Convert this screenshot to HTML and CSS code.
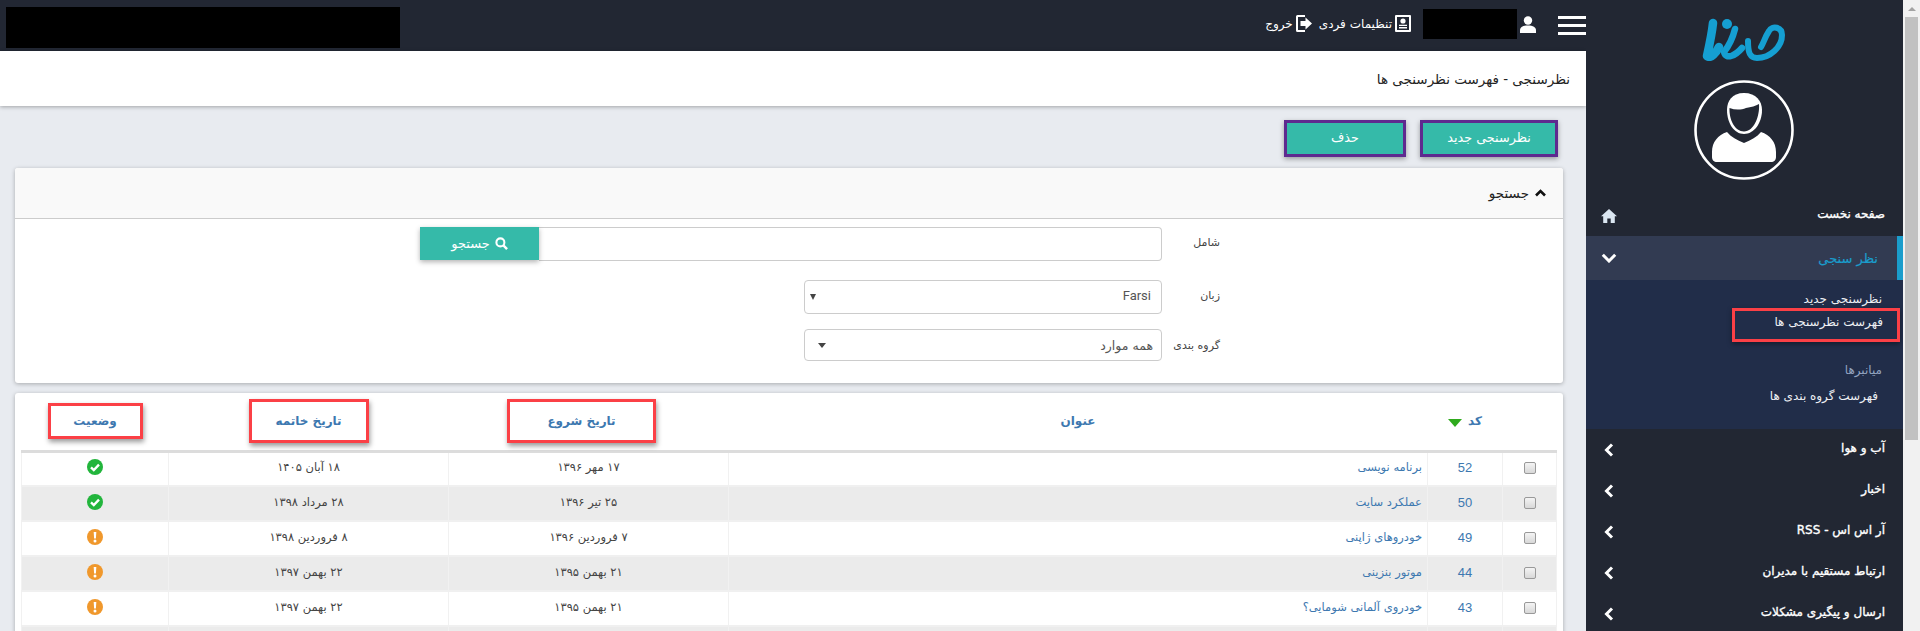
FILE: index.html
```html
<!DOCTYPE html>
<html lang="fa">
<head>
<meta charset="utf-8">
<title>فهرست نظرسنجی ها</title>
<link rel="stylesheet" href="styles.css">
</head>
<body>
<div class="shell">
  <main class="main" dir="rtl">
    <header class="topbar">
      <div class="hamburger"><span></span><span></span><span></span></div>
      <svg class="ic-user" viewBox="0 0 16 17"><circle cx="8" cy="4.5" r="4.2" fill="#fff"/><path d="M0 17v-2.5C0 11 3 9.5 8 9.5s8 1.5 8 5V17z" fill="#fff"/></svg>
      <div class="redact redact-user"></div>
      <a class="top-link link-settings">
        <svg class="ic-top" viewBox="0 0 16 17"><path d="M1 0h14a1 1 0 0 1 1 1v15a1 1 0 0 1-1 1H1a1 1 0 0 1-1-1V1a1 1 0 0 1 1-1zm1 2v13h12V2z" fill="#fff"/><circle cx="8" cy="6" r="2.6" fill="#fff"/><path d="M4 11V9.800h8V11zM4 13.500v-1.500h8v1.500z" fill="#fff"/></svg>
        <span>تنظیمات فردی</span>
      </a>
      <a class="top-link link-exit">
        <svg class="ic-top" viewBox="0 0 16 17"><path d="M0 1.500A1.500 1.500 0 0 1 1.500 0H9v2H2v13h7v2H1.500A1.500 1.500 0 0 1 0 15.500z" fill="#fff"/><path d="M4.500 6h5V2.500L16 8.500l-6.500 6V11h-5z" fill="#fff"/></svg>
        <span>خروج</span>
      </a>
      <div class="redact redact-brand"></div>
    </header>

    <div class="page-title"><h1>نظرسنجی - فهرست نظرسنجی ها</h1></div>

    <div class="actions">
      <button class="btn btn-new">نظرسنجی جدید</button>
      <button class="btn btn-del">حذف</button>
    </div>

    <section class="panel search">
      <div class="panel-head">
        <svg class="ic-up" viewBox="0 0 11 8"><path d="M1 6.500 5.500 2 10 6.500" fill="none" stroke="#111" stroke-width="2.600"/></svg>
        <span>جستجو</span>
      </div>
      <div class="form-row row-a">
        <label>شامل</label>
        <div class="input-group">
          <div class="input"></div>
          <button class="btn-search">
            <svg class="ic-search" viewBox="0 0 14 14"><circle cx="5.800" cy="5.800" r="4.300" fill="none" stroke="#fff" stroke-width="2.200"/><path d="m9 9 4 4" stroke="#fff" stroke-width="2.600"/></svg>
            <span>جستجو</span>
          </button>
        </div>
      </div>
      <div class="form-row row-b">
        <label>زبان</label>
        <div class="select select-b"><span class="val-latin">Farsi</span><i class="caret caret-sm"></i></div>
      </div>
      <div class="form-row row-c">
        <label class="label-low">گروه بندی</label>
        <div class="select select-c"><span>همه موارد</span><i class="caret"></i></div>
      </div>
    </section>

    <section class="panel list">
      <table>
        <colgroup>
          <col class="c-check"><col class="c-code"><col class="c-title"><col class="c-date"><col class="c-date"><col class="c-status">
        </colgroup>
        <thead>
          <tr>
            <th></th>
            <th><span class="sort">کد</span><i class="sort-arrow"></i></th>
            <th>عنوان</th>
            <th><span class="mark mark-start">تاریخ شروع</span></th>
            <th><span class="mark mark-end">تاریخ خاتمه</span></th>
            <th><span class="mark mark-status">وضعیت</span></th>
          </tr>
        </thead>
        <tbody>
          <tr>
            <td><i class="check"></i></td><td class="code">52</td><td class="name">برنامه نویسی</td><td>۱۷ مهر ۱۳۹۶</td><td>۱۸ آبان ۱۴۰۵</td>
            <td><svg class="st" viewBox="0 0 16 16"><circle cx="8" cy="8" r="8" fill="#22b53c"/><path d="m4 8.300 2.800 2.700L12 5.700" fill="none" stroke="#fff" stroke-width="2.400"/></svg></td>
          </tr>
          <tr>
            <td><i class="check"></i></td><td class="code">50</td><td class="name">عملکرد سایت</td><td>۲۵ تیر ۱۳۹۶</td><td>۲۸ مرداد ۱۳۹۸</td>
            <td><svg class="st" viewBox="0 0 16 16"><circle cx="8" cy="8" r="8" fill="#22b53c"/><path d="m4 8.300 2.800 2.700L12 5.700" fill="none" stroke="#fff" stroke-width="2.400"/></svg></td>
          </tr>
          <tr>
            <td><i class="check"></i></td><td class="code">49</td><td class="name">خودروهای ژاپنی</td><td>۷ فروردین ۱۳۹۶</td><td>۸ فروردین ۱۳۹۸</td>
            <td><svg class="st" viewBox="0 0 16 16"><circle cx="8" cy="8" r="8" fill="#f0982c"/><path d="M6.700 3h2.600l-.4 6.500H7.100z" fill="#fff"/><circle cx="8" cy="12" r="1.500" fill="#fff"/></svg></td>
          </tr>
          <tr>
            <td><i class="check"></i></td><td class="code">44</td><td class="name">موتور بنزینی</td><td>۲۱ بهمن ۱۳۹۵</td><td>۲۲ بهمن ۱۳۹۷</td>
            <td><svg class="st" viewBox="0 0 16 16"><circle cx="8" cy="8" r="8" fill="#f0982c"/><path d="M6.700 3h2.600l-.4 6.500H7.100z" fill="#fff"/><circle cx="8" cy="12" r="1.500" fill="#fff"/></svg></td>
          </tr>
          <tr>
            <td><i class="check"></i></td><td class="code">43</td><td class="name">خودروی آلمانی شومایی؟</td><td>۲۱ بهمن ۱۳۹۵</td><td>۲۲ بهمن ۱۳۹۷</td>
            <td><svg class="st" viewBox="0 0 16 16"><circle cx="8" cy="8" r="8" fill="#f0982c"/><path d="M6.700 3h2.600l-.4 6.500H7.100z" fill="#fff"/><circle cx="8" cy="12" r="1.500" fill="#fff"/></svg></td>
          </tr>
          <tr><td></td><td></td><td></td><td></td><td></td><td></td></tr>
        </tbody>
      </table>
    </section>
  </main>

  <aside class="sidebar" dir="rtl">
    <div class="brand">
      <svg class="logo" viewBox="0 0 84 44"><g fill="none" stroke="#159fd2" stroke-linecap="round" stroke-linejoin="round"><path d="M11 6C10 16 7 30 5 39C9 42 14 36 17 30" stroke-width="8.500"/><path d="M33 12C31 20 26 30 22 35C24 43 33 39 40 31" stroke-width="6.500"/><path d="M46 24C46 36 48 41 55 41C68 41 80 30 80 18C80 10 70 8 67 14C63 20 62 25 59 30" stroke-width="6"/></g><circle cx="25" cy="7" r="5" fill="#159fd2"/></svg>
      <svg class="avatar" viewBox="0 0 100 100"><circle cx="50" cy="50" r="48.500" fill="none" stroke="#fff" stroke-width="2.600"/><path d="M50 13C62 13 68 21 68 30C68 43 60 54 50 54C40 54 33 43 33 30C33 21 38 13 50 13z" fill="#fff"/><path d="M35.500 28C41 30 47 30 52 28C57 27 62 26 65 24C66 36 60 51.500 50 51.500C41 51.500 35 40 35.500 28z" fill="#222733"/><path d="M33 52C37 57 43 60 50 63C57 60 63 57 67 52C76 55 82 62 82 72V77C82 80 80 82 77 82H23C20 82 18 80 18 77V72C18 62 24 55 33 52z" fill="#fff"/></svg>
    </div>
    <nav>
      <a class="nav-item nav-home"><span>صفحه نخست</span>
        <svg class="ic-home" viewBox="0 0 16 14"><path d="M8 0 16 7.200h-2.200V14H9.700V9.400H6.300V14H2.200V7.200H0z" fill="#dbe6f1"/></svg></a>
      <a class="nav-active"><span>نظر سنجی</span>
        <svg class="chev" viewBox="0 0 16 10"><path d="M1.800 1.800 8 8l6.200-6.200" fill="none" stroke="#fff" stroke-width="3"/></svg></a>
      <div class="submenu">
        <a class="sub sub-first">نظرسنجی جدید</a>
        <a class="sub sub-mark">فهرست نظرسنجی ها</a>
        <a class="sub sub-muted">میانبرها</a>
        <a class="sub sub-last">فهرست گروه بندی ها</a>
      </div>
      <a class="nav-item"><span>آب و هوا</span><svg class="chev-l" viewBox="0 0 10 14"><path d="M8 1.500 2.500 7 8 12.500" fill="none" stroke="#fff" stroke-width="3"/></svg></a>
      <a class="nav-item"><span>اخبار</span><svg class="chev-l" viewBox="0 0 10 14"><path d="M8 1.500 2.500 7 8 12.500" fill="none" stroke="#fff" stroke-width="3"/></svg></a>
      <a class="nav-item"><span>آر اس اس - RSS</span><svg class="chev-l" viewBox="0 0 10 14"><path d="M8 1.500 2.500 7 8 12.500" fill="none" stroke="#fff" stroke-width="3"/></svg></a>
      <a class="nav-item"><span>ارتباط مستقیم با مدیران</span><svg class="chev-l" viewBox="0 0 10 14"><path d="M8 1.500 2.500 7 8 12.500" fill="none" stroke="#fff" stroke-width="3"/></svg></a>
      <a class="nav-item"><span>ارسال و پیگیری مشکلات</span><svg class="chev-l" viewBox="0 0 10 14"><path d="M8 1.500 2.500 7 8 12.500" fill="none" stroke="#fff" stroke-width="3"/></svg></a>
    </nav>
  </aside>

  <div class="scrollbar">
    <div class="sb-up"></div>
    <div class="sb-thumb"></div>
  </div>
</div>
</body>
</html>
```

FILE: styles.css
```css
* { box-sizing: border-box; }
html, body { margin: 0; height: 631px; overflow: hidden; }
body { font-family: "DejaVu Sans", "Noto Sans", sans-serif; font-size: 11px; color: #333; }
.shell { display: grid; grid-template-columns: 1586px 317px 17px; height: 631px; overflow: hidden; }

/* main */
.main { background: #e8ebf0; height: 631px; overflow: hidden; }
.topbar { height: 51px; background: #222733; display: flex; align-items: center; color: #fff; }
.hamburger { width: 28px; display: flex; flex-direction: column; gap: 5px; margin-top: -1px; }
.hamburger span { display: block; height: 3px; background: #fff; }
.ic-user { width: 16px; height: 17px; margin-right: 22px; margin-top: -3px; }
.redact { background: #000; }
.redact-user { width: 94px; height: 30px; margin-right: 3px; margin-top: -4px; }
.top-link { display: flex; align-items: center; gap: 3px; font-size: 12px; margin-top: -4px; color: #fff; }
.ic-top { width: 16px; height: 17px; flex: none; }
.link-settings { margin-right: 12px; }
.link-exit { margin-right: 7px; }
.redact-brand { width: 394px; height: 41px; margin-right: auto; margin-left: 6px; margin-top: 4px; }

.page-title { height: 55px; background: #fff; display: flex; align-items: center; padding-right: 16px; box-shadow: 0 1px 4px rgba(0,0,0,.3); position: relative; }
.page-title h1 { margin: 0; font-size: 13.500px; font-weight: 400; color: #222; }

.actions { display: flex; gap: 14px; padding: 14px 28px 0 0; height: 62px; }
.btn { height: 37px; background: #35baa9; border: 3px solid #5e2a8f; color: #fff; font: inherit; font-size: 12.800px; box-shadow: 0 2px 5px rgba(0,0,0,.35); padding: 0 0 3px; }
.btn-new { width: 138px; }
.btn-del { width: 122px; }

.panel { background: #fff; margin: 0 23px 0 15px; border-radius: 3px; box-shadow: 0 1px 4px rgba(0,0,0,.28); }
.search { height: 215px; }
.panel-head { height: 51px; background: #f9f9f9; border-bottom: 1px solid #ccc; display: flex; align-items: center; gap: 6px; padding-right: 17px; font-size: 13.500px; color: #222; border-radius: 3px 3px 0 0; }
.ic-up { width: 11px; height: 8px; }
.form-row { display: flex; align-items: center; padding-right: 343px; }
.form-row label { width: 58px; flex: none; color: #444; font-size: 11px; padding-bottom: 4px; }
.form-row .label-low { padding-bottom: 0; }
.row-a { margin-top: 8px; }
.row-b { margin-top: 19px; }
.row-c { margin-top: 15px; }
.input-group { width: 742px; height: 34px; display: flex; }
.input { flex: 1; border: 1px solid #ccc; border-left: 0; border-radius: 0 4px 4px 0; background: #fff; }
.btn-search { width: 119px; height: 33px; border: 0; background: #35baa9; color: #fff; font: inherit; font-size: 13px; display: flex; align-items: center; justify-content: center; gap: 5px; box-shadow: 0 2px 5px rgba(0,0,0,.3); padding: 0; }
.ic-search { width: 13px; height: 13px; }
.select { width: 358px; border: 1px solid #ccc; border-radius: 4px; display: flex; align-items: center; justify-content: space-between; color: #555; background: #fff; }
.select-b { height: 34px; padding: 0 10px 0 5px; }
.select-c { height: 32px; padding: 0 8px 0 13px; font-size: 12.500px; }
.val-latin { font-family: "Roboto", "Liberation Sans", sans-serif; font-size: 13px; padding-bottom: 3px; }
.caret { border-top: 5px solid #444; border-left: 4px solid transparent; border-right: 4px solid transparent; }
.caret-sm { border-top-width: 6px; border-left-width: 3px; border-right-width: 3px; }

.list { margin-top: 10px; height: 260px; padding: 0 6px 0 7px; border-radius: 3px 3px 0 0; }
table { width: 1535px; table-layout: fixed; border-collapse: collapse; }
.c-check { width: 54px; }
.c-code { width: 75px; }
.c-title { width: 699px; }
.c-date { width: 280px; }
.c-status { width: 147px; }
th { height: 58px; border-bottom: 3px solid #dcdcdc; color: #3d78b0; font-size: 12px; font-weight: 700; text-align: center; padding: 0; }
td { height: 35px; padding: 0 0 3px; text-align: center; color: #444; font-size: 11.500px; border-left: 1px solid #f1f1f1; border-right: 1px solid #f1f1f1; border-bottom: 2px solid #f0f0f0; }
tbody tr:nth-child(even) td { background: #ebebeb; }
td.code { color: #3d78b0; font-family: "Liberation Sans", sans-serif; font-size: 13px; padding-bottom: 3px; }
td.name { text-align: right; padding-right: 5px; color: #3d78b0; font-size: 11.500px; }
.mark { display: inline-block; border: 3px solid #fb4046; box-shadow: 1px 3px 5px rgba(0,0,0,.4); line-height: 1; }
.mark-start { width: 149px; padding: 13px 0; margin-right: 14px; }
.mark-end { width: 120px; padding: 13px 0; }
.mark-status { width: 95px; padding: 9px 0; }
.sort-arrow { display: inline-block; margin-right: 6px; border-top: 8px solid #2faa1d; border-left: 7px solid transparent; border-right: 7px solid transparent; vertical-align: -2px; }
.check { display: inline-block; width: 12px; height: 12px; border: 1px solid #999; border-radius: 2px; background: linear-gradient(#f4f4f4,#d8d8d8); vertical-align: middle; }
.st { width: 16px; height: 16px; display: inline-block; vertical-align: middle; }

/* sidebar */
.sidebar { background: #222733; height: 631px; overflow: hidden; color: #fff; }
.brand { height: 195px; display: flex; flex-direction: column; align-items: center; padding-top: 17px; }
.logo { width: 84px; height: 44px; margin-left: -2px; }
.avatar { width: 100px; height: 100px; margin-top: 19px; margin-right: 2px; }
.nav-item { height: 41px; display: flex; align-items: center; justify-content: space-between; padding: 0 18px 0 15px; font-size: 12px; font-weight: 400; -webkit-text-stroke: .35px #fff; color: #fff; }
.nav-item span { padding-bottom: 3px; }
.nav-home { height: 41px; }
.ic-home { width: 16px; height: 14px; }
.nav-active { height: 44px; background: #323b52; border-right: 6px solid #1a9dcc; display: flex; align-items: center; justify-content: space-between; padding: 0 19px 0 15px; color: #1a9dcc; font-size: 13px; font-weight: 400; -webkit-text-stroke: .2px #1a9dcc; }
.chev { width: 16px; height: 10px; }
.chev-l { width: 10px; height: 14px; margin-left: 3px; }
.submenu { height: 149px; background: #212d49; display: flex; flex-direction: column; align-items: flex-start; padding-top: 7px; font-size: 12px; }
.sub { color: #eef0f4; padding-right: 21px; line-height: 24px; }
.sub-mark { width: 168px; height: 34px; margin-right: 3px; border: 3px solid #fb4046; padding-right: 14px; line-height: 22px; box-shadow: 0 2px 5px rgba(0,0,0,.4); margin-top: -3px; }
.sub-muted { color: #93a4c0; margin-top: 16px; }
.sub-last { padding-right: 25px; margin-top: 2px; }

/* scrollbar */
.scrollbar { background: #f1f1f1; display: flex; flex-direction: column; align-items: center; }
.sb-up { width: 0; height: 0; margin: 7px 0 6px; border-bottom: 4px solid #a3a3a3; border-left: 4px solid transparent; border-right: 4px solid transparent; }
.sb-thumb { width: 13px; height: 423px; background: #c1c1c1; }
```
